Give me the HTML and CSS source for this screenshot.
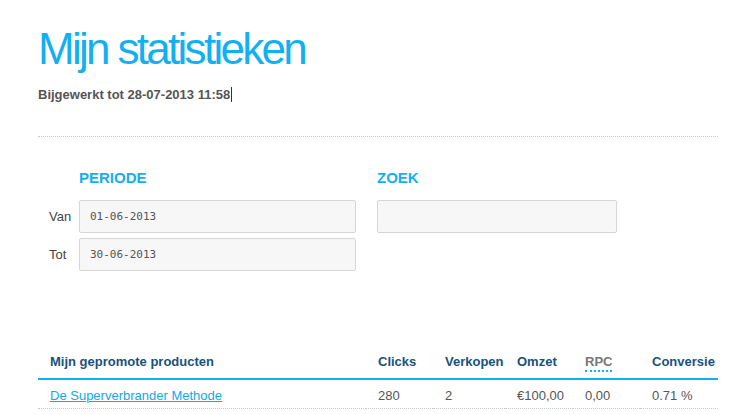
FILE: index.html
```html
<!DOCTYPE html>
<html>

<head>
  <title>Mijn statistieken</title>
  <link rel="stylesheet" href="styles.css">
</head>

<body>
  <div id="page">
    <h1 id="title">Mijn statistieken</h1>
    <p id="updated">Bijgewerkt tot 28-07-2013 11:58<span class="caret"></span></p>

    <div class="divider"></div>

    <div id="filters">
      <div class="filter-group period">
        <h2>PERIODE</h2>
        <div class="field">
          <label>Van</label>
          <div class="input">01-06-2013</div>
        </div>
        <div class="field">
          <label>Tot</label>
          <div class="input">30-06-2013</div>
        </div>
      </div>
      <div class="filter-group search">
        <h2>ZOEK</h2>
        <div class="input"></div>
      </div>
    </div>

    <table id="stats">
      <thead>
        <tr>
          <th class="col-product">Mijn gepromote producten</th>
          <th class="col-clicks">Clicks</th>
          <th class="col-sales">Verkopen</th>
          <th class="col-revenue">Omzet</th>
          <th class="col-rpc"><abbr title="Revenue per click">RPC</abbr></th>
          <th class="col-conv">Conversie</th>
        </tr>
      </thead>
      <tbody>
        <tr>
          <td><a href="#">De Superverbrander Methode</a></td>
          <td>280</td>
          <td>2</td>
          <td>&euro;100,00</td>
          <td>0,00</td>
          <td>0.71 %</td>
        </tr>
      </tbody>
    </table>
  </div>
</body>

</html>
```

FILE: styles.css
```css
body {
  margin: 0;
  font-family: 'Liberation Sans', Arial, sans-serif;
  background-color: #fff;
  color: #555;
}

#page {
  width: 680px;
  padding: 0 0 0 38px;
}

#title {
  margin: 24px 0 0 0;
  font-size: 44px;
  line-height: 50px;
  font-weight: normal;
  letter-spacing: -2.7px;
  color: #12b0f2;
}

#updated {
  margin: 13px 0 0 0;
  font-size: 13px;
  line-height: 16px;
  font-weight: bold;
  color: #555;
}

.caret {
  display: inline-block;
  width: 1px;
  height: 15px;
  margin-left: 1px;
  vertical-align: -3px;
  background-color: #333;
}

.divider {
  margin-top: 33px;
  border-top: 1px dotted #c8c8c8;
}

#filters {
  display: flex;
  margin-top: 32px;
}

#filters h2 {
  margin: 0 0 13px 0;
  font-size: 15px;
  line-height: 18px;
  font-weight: bold;
  color: #12b0f2;
}

.period {
  width: 339px;
}

.period h2 {
  padding-left: 41px;
}

.field {
  display: flex;
  align-items: center;
  margin-bottom: 5px;
}

.field label {
  width: 41px;
  box-sizing: border-box;
  padding-left: 11px;
  font-size: 13px;
  color: #444;
}

.input {
  box-sizing: border-box;
  width: 277px;
  height: 33px;
  padding: 0 10px;
  border: 1px solid #d6d6d6;
  border-radius: 2px;
  background-color: #f7f7f7;
  font-family: 'DejaVu Sans Mono', monospace;
  font-size: 11px;
  line-height: 31px;
  color: #555;
}

.search .input {
  width: 240px;
}

#stats {
  width: 680px;
  margin-top: 72px;
  border-collapse: collapse;
  font-size: 13px;
}

#stats th {
  text-align: left;
  padding: 6px 0 8px 12px;
  font-weight: bold;
  color: #18527a;
  border-bottom: 2px solid #12b0f2;
  line-height: 16px;
}

#stats td {
  padding: 8px 0 4px 12px;
  line-height: 16px;
  color: #555;
  border-bottom: 1px dotted #c8c8c8;
}

#stats a {
  color: #12a8ec;
}

.col-product {
  width: 316px;
}

.col-clicks {
  width: 55px;
}

.col-sales {
  width: 60px;
}

.col-revenue {
  width: 56px;
}

.col-rpc {
  width: 55px;
}

#stats abbr {
  text-decoration: none;
  color: #777;
  border-bottom: 2px dotted #12b0f2;
  padding-bottom: 1px;
}
```
